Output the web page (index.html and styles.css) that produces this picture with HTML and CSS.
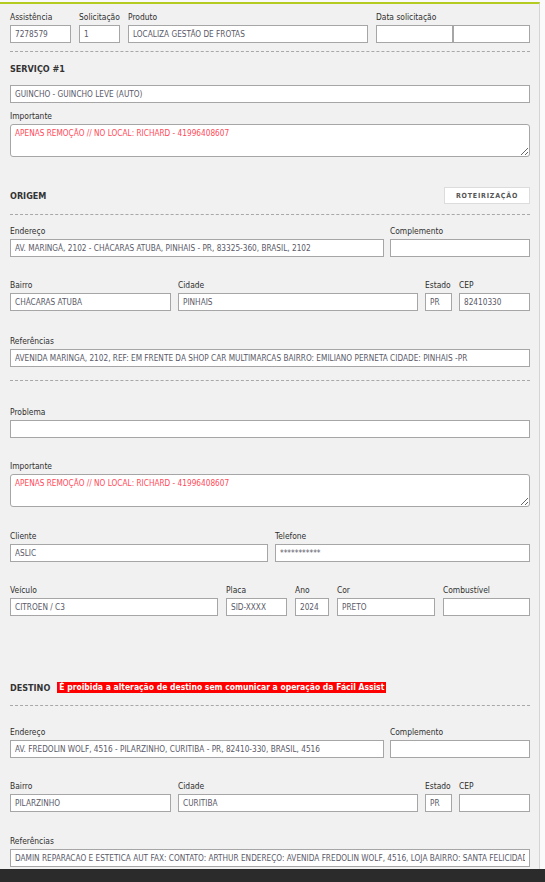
FILE: index.html
```html
<!DOCTYPE html>
<html lang="pt-BR">
<head>
<meta charset="utf-8">
<title>Serviço</title>
<link rel="stylesheet" href="styles.css">
</head>
<body>
<div class="page">
  <div class="panel">
    <div class="row row-top">
      <div class="field"><label>Assistência</label><input class="in" value="7278579"></div>
      <div class="field"><label>Solicitação</label><input class="in" value="1"></div>
      <div class="field"><label>Produto</label><input class="in" value="LOCALIZA GESTÃO DE FROTAS"></div>
      <div class="field"><label>Data solicitação</label>
        <div class="pair"><input class="in" value=""><input class="in" value=""></div>
      </div>
    </div>
    <div class="dash d1"></div>
    <h3 class="heading h-serv">SERVIÇO #1</h3>
    <input class="in full" value="GUINCHO - GUINCHO LEVE (AUTO)">
    <div class="field f-imp1"><label>Importante</label><textarea class="ta">APENAS REMOÇÃO // NO LOCAL: RICHARD - 41996408607</textarea></div>

    <div class="sec-head origem">
      <h3 class="heading">ORIGEM</h3>
      <button class="btn">ROTEIRIZAÇÃO</button>
    </div>
    <div class="dash d2"></div>
    <div class="row row-end m-end">
      <div class="field"><label>Endereço</label><input class="in" value="AV. MARINGÁ, 2102 - CHÁCARAS ATUBA, PINHAIS - PR, 83325-360, BRASIL, 2102"></div>
      <div class="field"><label>Complemento</label><input class="in" value=""></div>
    </div>
    <div class="row row-bairro m-bairro">
      <div class="field"><label>Bairro</label><input class="in" value="CHÁCARAS ATUBA"></div>
      <div class="field"><label>Cidade</label><input class="in" value="PINHAIS"></div>
      <div class="field"><label>Estado</label><input class="in" value="PR"></div>
      <div class="field"><label>CEP</label><input class="in" value="82410330"></div>
    </div>
    <div class="field m-ref"><label>Referências</label><input class="in" value="AVENIDA MARINGA, 2102, REF: EM FRENTE DA SHOP CAR MULTIMARCAS BAIRRO: EMILIANO PERNETA CIDADE: PINHAIS -PR"></div>
    <div class="dash d3"></div>
    <div class="field m-prob"><label>Problema</label><input class="in" value=""></div>
    <div class="field m-imp2"><label>Importante</label><textarea class="ta">APENAS REMOÇÃO // NO LOCAL: RICHARD - 41996408607</textarea></div>
    <div class="row row-cli m-cli">
      <div class="field"><label>Cliente</label><input class="in" value="ASLIC"></div>
      <div class="field"><label>Telefone</label><input class="in" value="***********"></div>
    </div>
    <div class="row row-vei m-vei">
      <div class="field"><label>Veículo</label><input class="in" value="CITROEN / C3"></div>
      <div class="field"><label>Placa</label><input class="in" value="SID-XXXX"></div>
      <div class="field"><label>Ano</label><input class="in" value="2024"></div>
      <div class="field"><label>Cor</label><input class="in" value="PRETO"></div>
      <div class="field"><label>Combustível</label><input class="in" value=""></div>
    </div>

    <div class="sec-head destino">
      <h3 class="heading">DESTINO</h3>
      <span class="warn">É proibida a alteração de destino sem comunicar a operação da Fácil Assist</span>
    </div>
    <div class="dash d4"></div>
    <div class="row row-end m-end2">
      <div class="field"><label>Endereço</label><input class="in" value="AV. FREDOLIN WOLF, 4516 - PILARZINHO, CURITIBA - PR, 82410-330, BRASIL, 4516"></div>
      <div class="field"><label>Complemento</label><input class="in" value=""></div>
    </div>
    <div class="row row-bairro m-bairro">
      <div class="field"><label>Bairro</label><input class="in" value="PILARZINHO"></div>
      <div class="field"><label>Cidade</label><input class="in" value="CURITIBA"></div>
      <div class="field"><label>Estado</label><input class="in" value="PR"></div>
      <div class="field"><label>CEP</label><input class="in" value=""></div>
    </div>
    <div class="field m-ref2"><label>Referências</label><input class="in" value="DAMIN REPARACAO E ESTETICA AUT FAX: CONTATO: ARTHUR ENDEREÇO: AVENIDA FREDOLIN WOLF, 4516, LOJA BAIRRO: SANTA FELICIDADE"></div>
  </div>
  <div class="footer-bar"></div>
</div>
</body>
</html>
```

FILE: styles.css
```css
* { box-sizing: border-box; }
html, body {
  margin: 0;
  padding: 0;
  background: #fafafa;
  height: 882px;
  overflow: hidden;
}
.page {
  padding-top: 2px;
  font-family: "DejaVu Sans Condensed", "DejaVu Sans", sans-serif;
  color: #333;
}
.panel {
  width: 540px;
  height: 867px;
  background: #f1f1f1;
  border-top: 2px solid #b3cc1f;
  border-right: 1px solid #d4d4d4;
  padding: 7px 9px 0 10px;
  overflow: hidden;
}
.footer-bar {
  height: 13px;
  background: #2b2b2b;
}
.field { display: flex; flex-direction: column; min-width: 0; }
label {
  display: block;
  font-size: 8.4px;
  line-height: 13px;
  height: 13px;
  margin-bottom: 1px;
  color: #2e2e2e;
  white-space: nowrap;
}
.in {
  display: block;
  width: 100%;
  height: 18px;
  margin: 0;
  padding: 0 4px;
  border: 1px solid #a6a6a6;
  border-radius: 0;
  background: #fff;
  font-family: inherit;
  font-size: 8.2px;
  color: #5a5a68;
  outline: none;
}
.ta {
  display: block;
  width: 100%;
  height: 33px;
  margin: 0;
  padding: 3px 4px;
  border: 1px solid #a6a6a6;
  border-radius: 3px;
  background: #fff;
  font-family: inherit;
  font-size: 8.2px;
  line-height: 10px;
  color: #ff4a5a;
  resize: vertical;
  outline: none;
}
.row { display: grid; }
.row-top { grid-template-columns: 61px 41px 240px 1fr; column-gap: 8px; }
.pair { display: flex; }
.pair .in { width: 50%; }
.row-end { grid-template-columns: 374px 1fr; column-gap: 6px; }
.row-bairro { grid-template-columns: 161px 240px 27px 1fr; column-gap: 7px; }
.row-cli { grid-template-columns: 258px 1fr; column-gap: 7px; }
.row-vei { grid-template-columns: 208px 61px 34px 98px 1fr; column-gap: 8px; }

.dash { border-top: 1px dashed #a8a8a8; height: 0; }
.d1 { margin-top: 8px; }
.d2 { margin-top: 10px; }
.d3 { margin-top: 13px; }
.d4 { margin-top: 11px; }

.heading {
  margin: 0;
  font-size: 9px;
  line-height: 12px;
  font-weight: bold;
  color: #333;
}
.h-serv { margin-top: 11px; margin-bottom: 10px; }
.f-imp1 { margin-top: 7px; }

.sec-head { display: flex; align-items: center; }
.origem { margin-top: 30px; height: 17px; justify-content: space-between; }
.btn {
  height: 17px;
  width: 86px;
  padding: 0;
  background: #fff;
  border: 1px solid #dcdcdc;
  font-family: inherit;
  font-size: 7px;
  font-weight: bold;
  letter-spacing: 0.8px;
  color: #555;
}
.m-end { margin-top: 10px; }
.m-bairro { margin-top: 22px; }
.m-ref { margin-top: 24px; }
.m-prob { margin-top: 25px; }
.m-imp2 { margin-top: 22px; }
.m-cli { margin-top: 23px; }
.m-vei { margin-top: 22px; }

.destino { margin-top: 65px; height: 13px; gap: 7px; }
.warn {
  background: #ff0000;
  color: #fff;
  font-weight: bold;
  font-size: 8.5px;
  line-height: 11px;
  padding: 0 2px;
  white-space: nowrap;
}
.m-end2 { margin-top: 20px; }
.m-ref2 { margin-top: 23px; }
```
